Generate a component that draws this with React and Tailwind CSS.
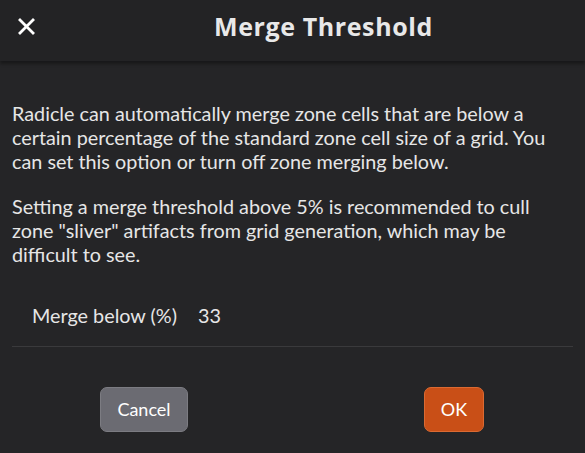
import React from 'react';

export default function App() {
  return (
    <div className="w-[585px] h-[453px] bg-[#252527] text-[#e6e6e6] flex flex-col" style={{ fontFamily: 'Lato, "Open Sans", sans-serif' }}>
      <div className="relative h-[61px] bg-[#232325] shadow-[0_3px_3px_rgba(0,0,0,0.35)] flex items-center pl-[214px] pb-[7px] shrink-0">
        <button className="absolute left-[18px] top-[18px] w-[17px] h-[17px] flex items-center justify-center">
          <svg width="17" height="17" viewBox="0 0 17 17" fill="none" stroke="#ffffff" strokeWidth="2.8" strokeLinecap="square">
            <path d="M2 2 L15 15 M15 2 L2 15" />
          </svg>
        </button>
        <h1 className="text-[25px] font-bold text-[#e8e8e8] tracking-[0.6px]" style={{ fontFamily: '"Open Sans", sans-serif' }}>
          Merge Threshold
        </h1>
      </div>

      <div className="px-[12px] pt-[40px] text-[19.8px] leading-[24px]">
        <p className="mb-[21px]">
          Radicle can automatically merge zone cells that are below a certain percentage of the standard zone cell size of a grid. You can set this option or turn off zone merging below.
        </p>
        <p>
          Setting a merge threshold above 5% is recommended to cull zone "sliver" artifacts from grid generation, which may be difficult to see.
        </p>
        <div className="flex items-center h-[81px] pl-[20px] border-b border-[#3a3a3c] pt-[17px] text-[19.8px]">
          <span>Merge below (%)</span>
          <span className="ml-[21px]">33</span>
        </div>
      </div>

      <div className="flex justify-between pt-[40px] pl-[100px] pr-[101px]">
        <button className="w-[88px] h-[45px] rounded-[7px] bg-[#6b6b72] border border-[#7c7c82] text-[18px] text-white">
          Cancel
        </button>
        <button className="w-[60px] h-[45px] rounded-[7px] bg-[#c94f17] border border-[#db6a32] text-[18px] text-white">
          OK
        </button>
      </div>
    </div>
  );
}
